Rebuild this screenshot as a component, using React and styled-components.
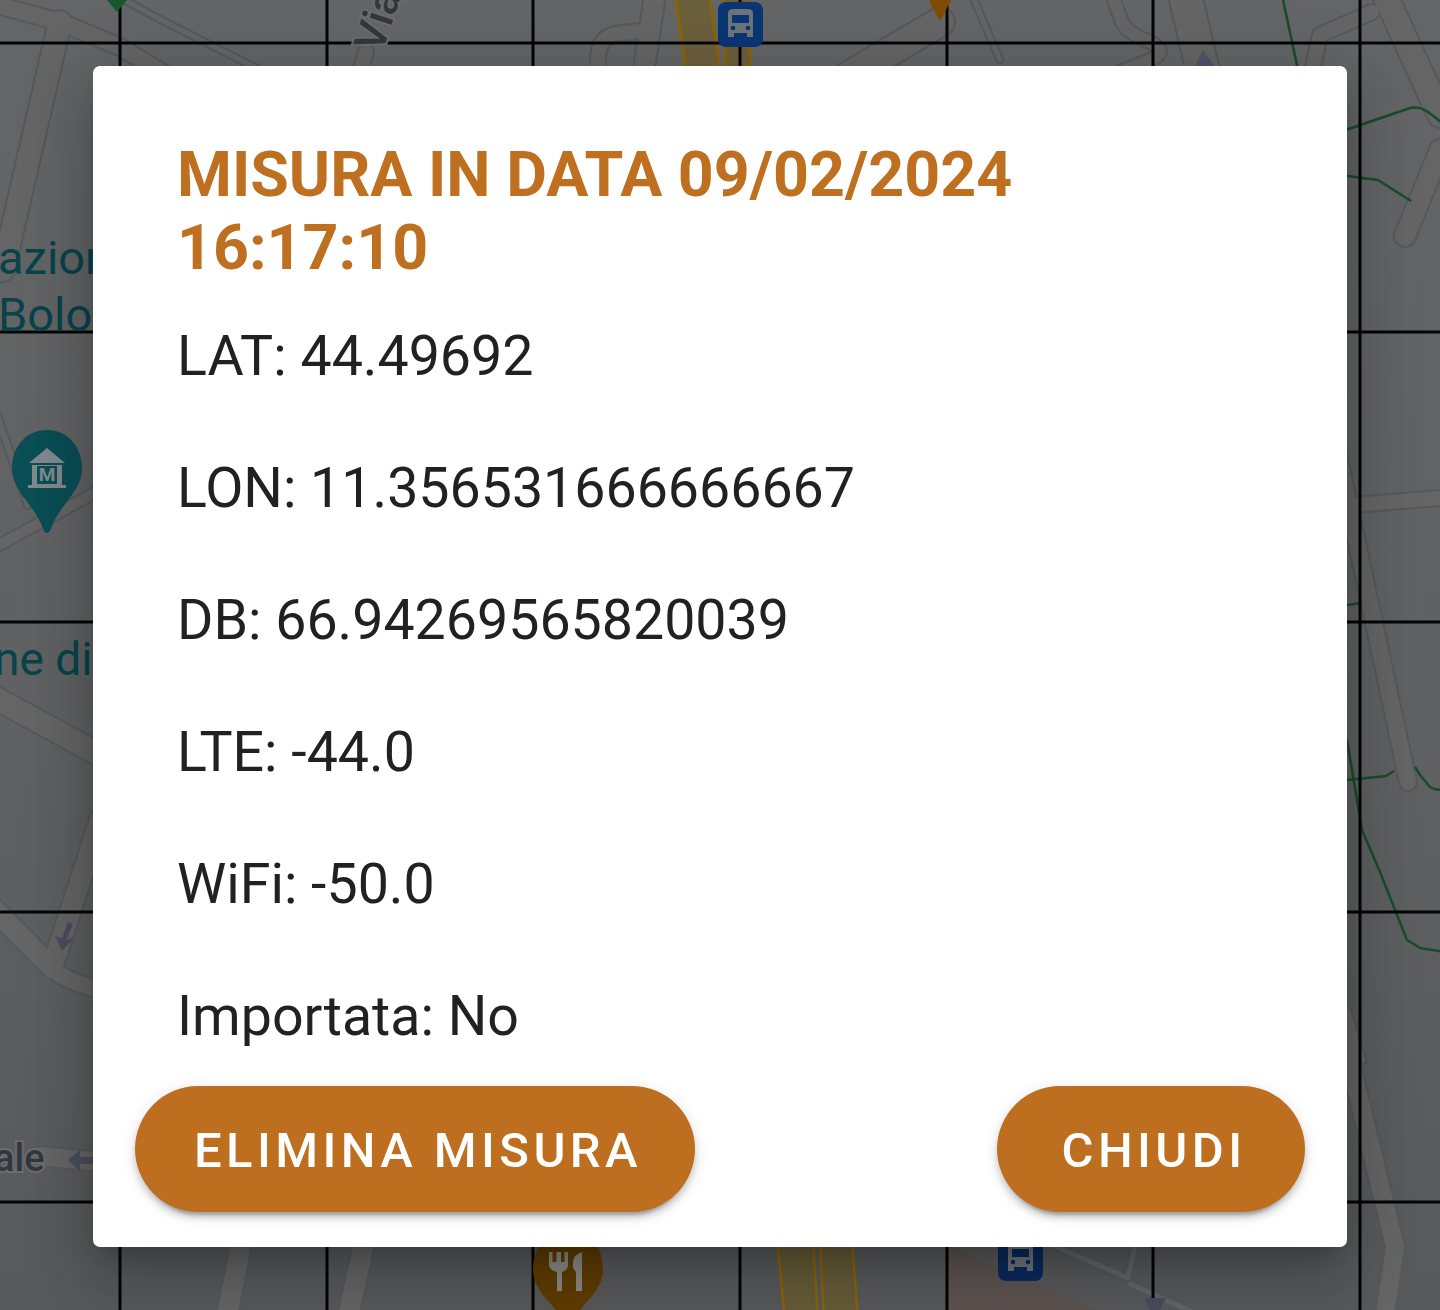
import React from "react";
import styled, { createGlobalStyle } from "styled-components";

const GlobalStyle = createGlobalStyle`
  html, body {
    margin: 0;
    padding: 0;
    background: #5f6062;
  }
`;

const Page = styled.div`
  position: relative;
  width: 1440px;
  height: 1310px;
  overflow: hidden;
  padding: 66px 93px 63px;
  box-sizing: border-box;
  font-family: Roboto, "Liberation Sans", sans-serif;
`;

const MapLayer = styled.svg`
  position: absolute;
  top: 0;
  left: 0;
  width: 1440px;
  height: 1310px;
`;

const Dialog = styled.div`
  position: relative;
  display: flex;
  flex-direction: column;
  height: 1181px;
  background: #fff;
  border-radius: 7px;
  box-shadow: 0 33px 57px 4px rgba(0, 0, 0, 0.14), 0 13px 69px 12px rgba(0, 0, 0, 0.12),
    0 16px 22px -10px rgba(0, 0, 0, 0.2);
`;

const Title = styled.h1`
  margin: 0;
  padding: 72px 300px 0 84px;
  font-size: 62.7px;
  line-height: 73px;
  font-weight: 700;
  color: #bf6f20;
`;

const Readings = styled.div`
  display: flex;
  flex-direction: column;
  gap: 66px;
  padding: 40px 84px 0;
`;

const Reading = styled.div`
  font-size: 55.5px;
  line-height: 66px;
  color: #212121;
`;

const Actions = styled.div`
  display: flex;
  justify-content: space-between;
  margin-top: 36px;
  padding: 0 42px;
`;

const ActionButton = styled.button`
  min-width: 308px;
  height: 126px;
  padding: 2px 53px 0 59px;
  border: none;
  border-radius: 63px;
  background: #bd6e1e;
  color: #fff;
  font-family: inherit;
  font-size: 49px;
  font-weight: 500;
  letter-spacing: 4.4px;
  box-shadow: 0 9px 3px -6px rgba(0, 0, 0, 0.2), 0 6px 6px 0 rgba(0, 0, 0, 0.14),
    0 3px 15px 0 rgba(0, 0, 0, 0.12);
`;

const READINGS = [
  "LAT: 44.49692",
  "LON: 11.356531666666667",
  "DB: 66.94269565820039",
  "LTE: -44.0",
  "WiFi: -50.0",
  "Importata: No",
];

// [path, road width]
const ROADS = [
  ["M-10 3 L60 22 L120 47 L175 80", 16],
  ["M60 22 L3 270", 22],
  ["M115 -5 L165 22 L300 90", 5],
  ["M366 52 L358 80", 14],
  ["M655 -5 L645 62", 20],
  ["M648 30 L615 34 Q598 38 598 60 L596 80", 14],
  ["M940 22 L850 75", 28],
  ["M972 -5 L1000 60", 5],
  ["M1112 -5 L1122 22 Q1128 34 1150 42 Q1170 52 1150 60 L1120 72", 12],
  ["M1185 -5 L1205 80", 32],
  ["M1385 -5 L1440 115", 24],
  ["M1310 80 L1320 35 L1372 12", 14],
  ["M1405 236 L1440 150", 20],
  ["M1335 440 L1408 782", 16],
  ["M1340 506 L1440 498", 14],
  ["M-10 395 L28 505", 6],
  ["M-10 550 L100 490", 10],
  ["M-10 695 L100 755", 22],
  ["M100 820 L52 968 L-10 905", 20],
  ["M52 968 Q62 980 100 990", 16],
  ["M40 1156 L100 1162", 18],
  ["M242 1240 L226 1320", 20],
  ["M365 1240 L347 1320", 20],
  ["M1050 1244 L1128 1278 L1136 1240", 5],
  ["M1130 1284 L1210 1320", 5],
  ["M1340 1020 L1395 1247 L1384 1320", 18],
  ["M1347 1010 L1362 1060", 6],
];

const GREEN_LINES = [
  "M1282 -5 L1298 70",
  "M1340 132 L1410 108 Q1420 106 1428 112 L1445 125",
  "M1340 175 L1378 180 L1411 201",
  "M1340 606 L1362 603",
  "M1347 780 L1386 776 L1394 771",
  "M1415 767 L1420 775 L1430 787 Q1434 790 1445 790",
  "M1347 740 L1362 830 L1380 872 L1407 940 L1420 948 L1445 952",
];

const BusIcon = ({ x, y, bg }) => (
  <g transform={`translate(${x} ${y})`}>
    <rect width="45" height="45" rx="8" fill={bg} />
    <path
      d="M10 11 Q10 7 16 7 H29 Q35 7 35 11 V35 H29 V31 H16 V35 H10 Z"
      fill="#6f7479"
    />
    <rect x="14" y="13" width="17" height="8" fill={bg} />
    <circle cx="15" cy="26" r="2.3" fill={bg} />
    <circle cx="30" cy="26" r="2.3" fill={bg} />
  </g>
);

const MapBackground = () => (
  <MapLayer viewBox="0 0 1440 1310">
    <defs>
      <linearGradient id="ground" x1="0" y1="0" x2="0" y2="1">
        <stop offset="0" stopColor="#646567" />
        <stop offset="0.55" stopColor="#606163" />
        <stop offset="1" stopColor="#58595a" />
      </linearGradient>
    </defs>
    <rect width="1440" height="1310" fill="url(#ground)" />
    <path d="M945 1245 L1120 1320 L945 1320 Z" fill="#5e5452" />

    {ROADS.map(([d, w]) => (
      <path key={d} d={d} fill="none" stroke="#57585a" strokeWidth={w + 4} strokeLinecap="round" strokeLinejoin="round" />
    ))}
    {ROADS.map(([d, w]) => (
      <path key={d} d={d} fill="none" stroke="#656566" strokeWidth={w} strokeLinecap="round" strokeLinejoin="round" />
    ))}

    {/* rail bands */}
    <path d="M675 -5 L686 70 L720 70 L709 -5 Z" fill="#6b5f3c" stroke="#8a6406" strokeWidth="3" />
    <path d="M724 -5 L726 70 L751 70 L746 -5 Z" fill="#6b5f3c" stroke="#8a6406" strokeWidth="3" />
    <path d="M777 1240 L785 1320 L818 1320 L813 1240 Z" fill="#665c38" stroke="#8a6406" strokeWidth="2.5" />
    <path d="M820 1240 L824 1320 L858 1320 L852 1240 Z" fill="#665c38" stroke="#8a6406" strokeWidth="2.5" />

    {GREEN_LINES.map(d => (
      <path key={d} d={d} fill="none" stroke="#174d29" strokeWidth="2.5" strokeLinejoin="round" />
    ))}

    {[120, 327, 533, 740, 947, 1153, 1360].map(x => (
      <line key={x} x1={x} x2={x} y1="0" y2="1310" stroke="#050505" strokeWidth="3" />
    ))}
    {[43, 332, 622, 912, 1202].map(y => (
      <line key={y} x1="0" x2="1440" y1={y} y2={y} stroke="#050505" strokeWidth="3" />
    ))}

    <path d="M107 0 H127 L117 12 Z" fill="#17582a" />
    <path d="M929 0 H951 L942 18 Q940 22 938 18 Z" fill="#7f4c00" />
    <path d="M1203 50 L1216 68 H1194 Z" fill="#50546a" />
    <path d="M73 924 L66 940 L74 938 L62 951 L55 936 L62 938 L68 922 Z" fill="#4a4d5e" />
    <path d="M1144 1298 H1166 L1160 1310 H1150 Z" fill="#4a4d5e" />

    <BusIcon x={718} y={2} bg="#0a3674" />
    <BusIcon x={998} y={1236} bg="#0a2a5c" />

    {/* museum pin */}
    <path
      d="M47 430 C26 430 12 447 12 468 C12 492 36 506 43 529 Q47 537 51 529 C58 506 82 492 82 468 C82 447 68 430 47 430 Z"
      fill="#0a4e56"
    />
    <path d="M47 448 L65 463 H29 Z M32 465 H62 V485 H32 Z M28 485 H66 V488 H28 Z" fill="#808a8c" />
    <rect x="37" y="466" width="20" height="18" fill="#0a4e56" />
    <text x="47" y="481" fontSize="19" fontWeight="700" textAnchor="middle" fill="#808a8c">M</text>

    {/* restaurant pin */}
    <path
      d="M568 1218 C548 1218 533 1250 533 1270 C533 1292 556 1305 564 1322 L572 1322 C580 1305 603 1292 603 1270 C603 1250 588 1218 568 1218 Z"
      fill="#603d00"
    />
    <path
      d="M549 1252 H552.5 V1262 H556.5 V1252 H561 V1262 H564.5 V1252 H568 V1265 Q568 1270 562 1272 V1291 H557 V1272 Q549 1270 549 1265 Z M582 1252 V1291 H576 V1272 L573 1268 V1262 Q574 1254 582 1252 Z"
      fill="#8c8a85"
    />

    <g fontFamily="Roboto, sans-serif">
      <text x="-2" y="274" fontSize="47" fill="#08434a">azion</text>
      <text x="-2" y="331" fontSize="47" fill="#08434a">Bolo</text>
      <text x="-6" y="675" fontSize="46" fill="#08434a">ne di</text>
      <text x="-6" y="1171" fontSize="38" fontWeight="500" fill="#33363e" stroke="#6c6c6d" strokeWidth="4" paintOrder="stroke">ale</text>
      <text
        transform="translate(382 54) rotate(-72)"
        fontSize="43"
        fontWeight="500"
        fill="#33363e"
        stroke="#6c6c6d"
        strokeWidth="4"
        paintOrder="stroke"
      >
        Via
      </text>
    </g>
    <path d="M68 1160 L80 1150 V1157 H100 V1164 H80 V1171 Z" fill="#4a4d5e" />
  </MapLayer>
);

const App = () => (
  <Page>
    <GlobalStyle />
    <MapBackground />
    <Dialog>
      <Title>MISURA IN DATA 09/02/2024 16:17:10</Title>
      <Readings>
        {READINGS.map(text => (
          <Reading key={text}>{text}</Reading>
        ))}
      </Readings>
      <Actions>
        <ActionButton>ELIMINA MISURA</ActionButton>
        <ActionButton>CHIUDI</ActionButton>
      </Actions>
    </Dialog>
  </Page>
);

export default App;
